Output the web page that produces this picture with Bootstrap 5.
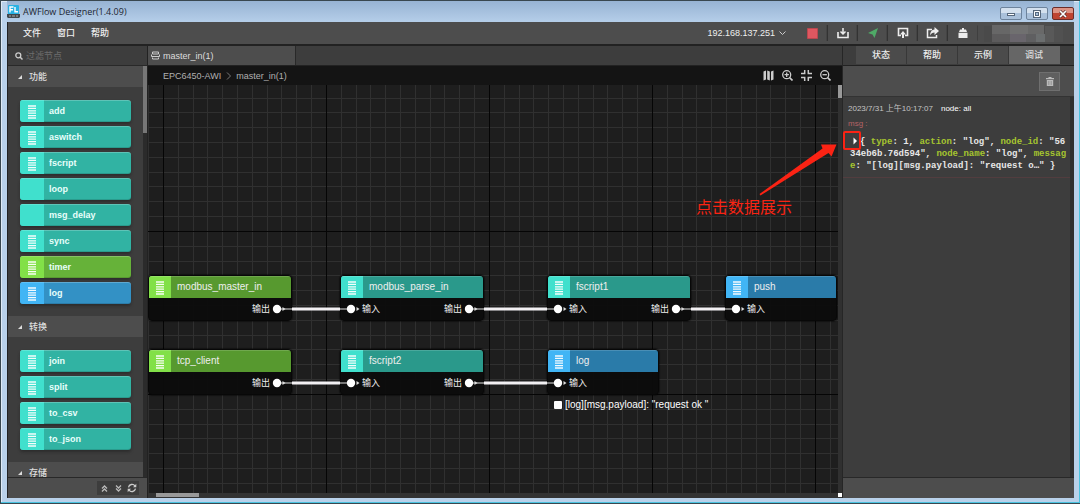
<!DOCTYPE html>
<html lang="zh-CN">
<head>
<meta charset="utf-8">
<meta name="viewport" content="width=device-width, initial-scale=1">
<title>AWFlow Designer(1.4.09)</title>
<link href="https://cdn.jsdelivr.net/npm/bootstrap@5.3.0/dist/css/bootstrap.min.css" rel="stylesheet">
<style>
  :root { --teal: #31b3a3; --teal-l: #40e0cd; --green: #66b239; --green-l: #82e048; --blue: #3391c5; --blue-l: #41b5f5; }
  body { font: 9px/12px "Liberation Sans", "Noto Sans CJK SC", sans-serif; color: #ddd; background: #b9d1ea; min-height: 100vh; }
  a { color: inherit; text-decoration: none; }
  svg { display: block; flex: none; }
  .btn { font-size: 9px; line-height: 12px; color: #eee; padding: 0; border: 0; border-radius: 0; --bs-btn-hover-color: #fff; }
  .app-window { height: 100vh; padding: 0 6px 5px 6px; background: #b9d1ea; border: solid #39474f; border-width: 1px 0 1px 1px; box-shadow: inset -1px -1px 0 #4ac3e0, inset 1px 1px 0 #dfeaf6; }
  .titlebar { height: 21px; gap: 3px; background: linear-gradient(#97b3d3, #b5cee9); color: #1c2530; font: 9px/14px "Open Sans", "Noto Sans", sans-serif; }
  .win-btn { width: 22px; height: 13px; border: 1px solid #6d839c; border-radius: 2px; background: linear-gradient(#d3e0ee 45%, #a9c0da 50%); }
  .win-close { background: linear-gradient(#dd9385 45%, #bf4331 50%); border-color: #6b2c28; }
  .app-body { background: #333; border-left: 1px solid #222; }
  .menubar { height: 24px; background: #4d4d4d; border-bottom: 2px solid #222; padding: 0 10px 0 15px; }
  .menubar .menu-item { font-weight: 500; }
  .host { margin-right: 11px; }
  .tool { width: 30px; height: 16px; border-left: 1px solid #333; box-shadow: -1px 0 0 #444; }
  .tool.tool-first { border-left: 0; box-shadow: none; }
  .sidebar { width: 139px; background: #3d3d3d; }
  .search { height: 20px; border-bottom: 1px solid #292929; padding-left: 7px; gap: 3px; }
  .search input { background: transparent; border: 0; color: #ddd; padding: 0; width: 100px; outline: 0; }
  .search input::placeholder { color: #6c6c6c; opacity: 1; }
  .group-head { height: 21px; background: #4d4d4d; width: 135px; font-weight: 500; padding-left: 9px; gap: 6px; }
  .group-items { padding: 13px 16px 12px 12px; gap: 4px; }
  .palette { height: 22px; border-radius: 3px; background: var(--c); box-shadow: 0 2px 3px #2229, inset 0 1px 0 #ffffff38, inset 0 -1px 0 #0002; color: #e8fffb; font-weight: bold; overflow: hidden; gap: 5px; }
  .glyph-box { width: 24px; height: 100%; background: var(--l); color: #fffffff0; border-top: 1px solid #ffffff2a; }
  .side-scroll { width: 4px; background: #2b2b2b; top: 0; right: 0; bottom: 0; }
  .side-thumb { height: 67px; background: #777; }
  .foot { height: 21px; background: #4d4d4d; border-top: 1px solid #282828; }
  .foot .btn { width: 14px; height: 14px; background: #3d3d3d; color: #aaa; }
  .teal { --c: var(--teal); --l: var(--teal-l); --n: #2a998b; }
  .green { --c: var(--green); --l: var(--green-l); --n: #57992f; }
  .blue { --c: var(--blue); --l: var(--blue-l); --n: #2a7ba9; }
  .center { border-left: 1px solid #222; min-width: 0; }
  .tabs { height: 20px; background: #3d3d3d; border-bottom: 1px solid #222; }
  .tab-item { width: 148px; background: #4d4d4d; border-right: 1px solid #292929; color: #ddd; padding-left: 3px; gap: 3px; }
  .crumbs { height: 19px; background: #141414; color: #b0b0b0; padding: 0 7px 0 15px; }
  .board { background: #1e1e1e; min-width: 0; }
  .flow-node { width: 144px; height: 46px; border: 1px solid #080808; border-radius: 4px; background: #0c0c0cf2; overflow: hidden; box-shadow: 0 0 1px 1px #0006; }
  .flow-node.short { width: 112px; }
  .flow-node header { height: 22px; background: var(--n); font-size: 10px; box-shadow: inset 0 1px 0 #ffffff26; color: #eee; gap: 6px; }
  .flow-node .glyph-box { width: 22px; }
  .ports { height: 22px; padding: 0 21px; color: #eee; }
  .node-status { font-size: 10px; gap: 3px; }
  .sb-v { width: 4px; background: #303030; }
  .sb-h { height: 5px; background: #333; }
  .thumb { background: #999; }
  .inspector { width: 232px; background: #3d3d3d; border-left: 1px solid #262626; }
  .inspector .tabs { padding-left: 13px; }
  .ins-tab { width: 51px; height: 18px; background: #4b4b4b; border-right: 1px solid #383838; font-weight: 500; }
  .ins-tab.active { background: #666; border-color: #666; }
  .ins-bar { height: 31px; background: #4d4d4d; border-bottom: 1px solid #333; padding-right: 14px; }
  .trash { width: 21px; height: 19px; background: #5f5f5f; border: 1px solid #6f6f6f; }
  .msg { border-bottom: 1px solid #523d3f; padding: 6px 1px 5px 5px; font-size: 8px; }
  .msg pre { font: bold 9px/12px "Liberation Mono", monospace; white-space: pre-wrap; word-break: break-all; color: #e8e8e8; margin: 6px 0 0 2px; overflow: visible; }
  .msg pre b { color: #a6c52f; }
  .msg .toggle { width: 10px; height: 10px; vertical-align: -2px; }
  .msg-when { color: #c4c4c4; gap: 8px; }
  .msg-topic { color: #b56366; padding-top: 3px; }
  .ins-scroll { width: 4px; background: #303030; }
  .callout-text { font-size: 16px; line-height: 24px; color: #f92413; top: 150px; right: 282px; }
</style>
</head>
<body>
<svg width="0" height="0" class="position-absolute" aria-hidden="true">
  <symbol id="g" viewBox="0 0 8 14"><path d="M0 1h8M0 3.400h8M0 5.800h8M0 8.200h8M0 10.600h8M0 13h8" stroke="currentColor" stroke-width="1.300"/></symbol>
  <symbol id="tri" viewBox="0 0 6 6"><path d="M5 1v4H1z" fill="currentColor"/></symbol>
</svg>
<div class="app-window d-flex flex-column">
  <div class="titlebar d-flex align-items-center flex-shrink-0">
    <svg width="13" height="13" viewBox="0 0 13 13" aria-hidden="true"><rect x="1" y="0" width="11" height="12" rx="1" fill="#27b2e4"/><path d="M0 9h13v3l-1 1H1l-1-1z" fill="#41484d"/><path d="M3 7.500V2h3.500M3 4.700h3M8 2v4.800h3" fill="none" stroke="#fff" stroke-width="1.400"/><path d="M2 11h2M5 11h3M9 11h2" stroke="#aaa"/></svg>
    <span class="text-nowrap">AWFlow Designer(1.4.09)</span>
    <div class="d-flex ms-auto gap-1 pt-1">
      <button class="btn win-btn d-flex align-items-center justify-content-center" aria-label="最小化"><svg width="10" height="6"><rect x="1.500" y="2.500" width="7" height="2" fill="#fff" stroke="#56677b"/></svg></button>
      <button class="btn win-btn d-flex align-items-center justify-content-center" aria-label="最大化"><svg width="8" height="8"><path d="M1.500 1.500h5v5h-5z" fill="none" stroke="#56677b" stroke-width="3"/><path d="M1.500 1.500h5v5h-5z" fill="none" stroke="#fff"/></svg></button>
      <button class="btn win-btn win-close d-flex align-items-center justify-content-center" aria-label="关闭"><svg width="10" height="8"><path d="M2 1l6 6M8 1L2 7" stroke="#5c3030" stroke-width="3"/><path d="M2 1l6 6M8 1L2 7" stroke="#fff" stroke-width="1.700"/></svg></button>
    </div>
  </div>

  <div class="app-body d-flex flex-column flex-fill overflow-hidden">
    <nav class="menubar d-flex align-items-center flex-shrink-0">
      <div class="d-flex gap-3">
        <button class="btn menu-item">文件</button><button class="btn menu-item">窗口</button><button class="btn menu-item">帮助</button>
      </div>
      <div class="d-flex align-items-center ms-auto">
        <button class="btn host d-flex align-items-center gap-1">192.168.137.251 <svg width="7" height="5"><path d="M0.500 0.500l3 3 3-3" fill="none" stroke="#ccc"/></svg></button>
        <button class="btn tool tool-first d-flex align-items-center justify-content-center" aria-label="停止"><svg width="11" height="11"><path d="M.5.5h10v10H.5z" fill="#df5760" stroke="#b9474f"/></svg></button>
        <button class="btn tool d-flex align-items-center justify-content-center" aria-label="下载"><svg width="12" height="12"><path d="M1 5v5.500h10V5" fill="none" stroke="#eee" stroke-width="1.600"/><path d="M6 1v6M3.500 4.500L6 7l2.500-2.500" fill="none" stroke="#eee" stroke-width="1.500"/></svg></button>
        <button class="btn tool d-flex align-items-center justify-content-center" aria-label="运行"><svg width="12" height="12"><path d="M11 1L7.500 11 5.500 7.500 1 6z" fill="#4faa67"/></svg></button>
        <button class="btn tool d-flex align-items-center justify-content-center" aria-label="上传"><svg width="12" height="12"><path d="M4 8.500H1.500v-7h9v7H8" fill="none" stroke="#eee" stroke-width="1.600"/><path d="M6 4l3 3.500H7V11H5V7.500H3z" fill="#eee"/></svg></button>
        <button class="btn tool d-flex align-items-center justify-content-center" aria-label="导出"><svg width="13" height="12"><path d="M6 2.500H1.500v8h9V8" fill="none" stroke="#eee" stroke-width="1.500"/><path d="M8.500 0L13 4 8.500 8V5.500Q5.500 5.500 4 8.500 4.200 3 8.500 2.500z" fill="#eee"/></svg></button>
        <button class="btn tool d-flex align-items-center justify-content-center" aria-label="清理"><svg width="10" height="12"><path d="M4 1h2v1.500h2L9 5H1l1-2.500h2zM.5 5.800h9V11h-9z" fill="#eee"/></svg></button>
        <svg width="87" height="20" aria-hidden="true"><path d="M0 2.500v15" stroke="#333"/><g><path d="M7 3h8v16H7z" fill="#4a4a4a"/><path d="M15 2h18v9H15z" fill="#676767"/><path d="M33 2h18v9H33z" fill="#707070"/><path d="M51 2h16v9H51z" fill="#696969"/><path d="M15 11h18v8H15z" fill="#5c5b5c"/><path d="M33 11h16v8H33z" fill="#69656c"/><path d="M49 11h10v8H49z" fill="#5f5f61"/><path d="M59 11h9v8h-9z" fill="#6b6e6f"/><path d="M68 3h9v16h-9z" fill="#595959"/><path d="M77 3h9v16h-9z" fill="#515151"/></g></svg>
      </div>
    </nav>

    <div class="d-flex flex-fill position-relative overflow-hidden">
      <aside class="sidebar d-flex flex-column flex-shrink-0">
        <label class="search d-flex align-items-center flex-shrink-0">
          <svg width="8" height="8" aria-hidden="true"><circle cx="3.300" cy="3.300" r="2.500" fill="none" stroke="#ccc" stroke-width="1.300"/><path d="M5 5l2.500 2.500" stroke="#ccc" stroke-width="1.500"/></svg>
          <input type="text" placeholder="过滤节点" aria-label="过滤节点">
        </label>
        <div class="flex-fill overflow-hidden position-relative" id="palette"></div>
        <div class="foot d-flex align-items-center justify-content-end pe-2 flex-shrink-0">
          <button class="btn d-flex align-items-center justify-content-center" aria-label="全部折叠"><svg width="7" height="7"><path d="M1 3.500L3.500 1 6 3.500M1 6.500L3.500 4 6 6.500" fill="none" stroke="#bbb" stroke-width="1.300"/></svg></button>
          <button class="btn d-flex align-items-center justify-content-center" aria-label="全部展开"><svg width="7" height="7"><path d="M1 .5L3.500 3 6 .5M1 3.500L3.500 6 6 3.500" fill="none" stroke="#bbb" stroke-width="1.300"/></svg></button>
          <button class="btn d-flex align-items-center justify-content-center" aria-label="刷新"><svg width="10" height="10"><path d="M1.500 4.300A3.600 3.600 0 0 1 8 3M8.500 5.700A3.600 3.600 0 0 1 2 7" fill="none" stroke="#ccc" stroke-width="1.300"/><path d="M9.300.8v3.500H6zM.7 9.200V5.700H4z" fill="#ccc"/></svg></button>
        </div>
      </aside>

      <main class="center d-flex flex-column flex-fill">
        <div class="tabs d-flex flex-shrink-0">
          <a href="#" class="tab-item d-flex align-items-center">
            <svg width="9" height="9" aria-hidden="true"><path d="M1.500 1h6v2h-6zM.5 3.500v2h8v-2M1.500 6.500v1.500h6V6.500" fill="none" stroke="#ccc"/></svg>master_in(1)</a>
        </div>
        <div class="crumbs d-flex align-items-center flex-shrink-0">
          <a href="#">EPC6450-AWI</a>
          <svg width="15" height="8" aria-hidden="true"><path d="M6 .5l3.500 3.500-3.500 3.500" fill="none" stroke="#777"/></svg>
          <a href="#">master_in(1)</a>
          <div class="d-flex ms-auto gap-2">
            <button class="btn" aria-label="地图"><svg width="11" height="11"><path d="M.5 1.500l2.500-1v9l-2.500 1zM4.200.5l2.600 1v9l-2.600-1zM8 1.500l2.500-1v9L8 10.500z" fill="#ccc"/></svg></button>
            <button class="btn" aria-label="放大"><svg width="11" height="11"><g fill="none" stroke="#ccc"><circle cx="4.700" cy="4.700" r="4" stroke-width="1.300"/><path d="M7.500 7.500l3 3" stroke-width="1.700"/><path d="M2.500 4.700h4.400M4.700 2.500v4.400" stroke-width="1.300"/></g></svg></button>
            <button class="btn" aria-label="适应"><svg width="11" height="11"><path d="M0 3.500h3.700V0M7.300 0v3.500H11M0 7.500h3.700V11M7.300 11V7.500H11" fill="none" stroke="#ccc" stroke-width="1.500"/></svg></button>
            <button class="btn me-1" aria-label="缩小"><svg width="11" height="11"><g fill="none" stroke="#ccc"><circle cx="4.700" cy="4.700" r="4" stroke-width="1.300"/><path d="M7.500 7.500l3 3" stroke-width="1.700"/><path d="M2.500 4.700h4.400" stroke-width="1.300"/></g></svg></button>
          </div>
        </div>
        <div class="d-flex flex-fill overflow-hidden">
          <div class="board position-relative flex-fill overflow-hidden" id="board">
            <svg class="position-absolute top-0 start-0 w-100 h-100" aria-hidden="true">
              <defs><pattern id="grid" x="15" y="-17" width="163" height="163" patternUnits="userSpaceOnUse">
                <path d="M15.500 0v163M30.500 0v163M44.500 0v163M59.500 0v163M74.500 0v163M89.500 0v163M104.500 0v163M118.500 0v163M133.500 0v163M148.500 0v163M0 15.500h163M0 30.500h163M0 44.500h163M0 59.500h163M0 74.500h163M0 89.500h163M0 104.500h163M0 118.500h163M0 133.500h163M0 148.500h163" stroke="#303030"/>
                <path d="M.5 0v163M0 .5h163" stroke="#050505"/>
              </pattern></defs>
              <rect width="100%" height="100%" fill="url(#grid)"/>
            </svg>
            <div id="nodes"></div>
            <svg class="position-absolute top-0 start-0 w-100 h-100" aria-hidden="true" id="wires"></svg>
          </div>
          <div class="sb-v flex-shrink-0"><div class="thumb" style="height:13px"></div></div>
        </div>
        <div class="sb-h d-flex justify-content-between flex-shrink-0 ps-2"><div class="thumb" style="width:43px;height:4px"></div><div class="bg-white" style="width:4px;height:4px"></div></div>
      </main>

      <aside class="inspector d-flex flex-column flex-shrink-0">
        <div class="tabs d-flex flex-shrink-0">
          <button class="btn ins-tab">状态</button><button class="btn ins-tab">帮助</button><button class="btn ins-tab">示例</button><button class="btn ins-tab active">调试</button>
        </div>
        <div class="ins-bar d-flex align-items-center justify-content-end flex-shrink-0">
          <button class="btn trash d-flex align-items-center justify-content-center" aria-label="清空"><svg width="8" height="9"><path d="M0 1h2.500V0h3v1H8v1.300H0zM.8 3h6.400v6H.8z" fill="#bbb"/><path d="M2.800 4v4M5.200 4v4" stroke="#888" stroke-width=".8"/></svg></button>
        </div>
        <div class="d-flex flex-fill overflow-hidden">
          <div class="flex-fill overflow-hidden">
            <div class="msg">
              <div class="msg-when d-flex"><span>2023/7/31 上午10:17:07</span><a href="#" class="text-white">node: all</a></div>
              <div class="msg-topic">msg :</div>
              <pre><svg class="toggle d-inline-block" viewBox="0 0 10 10"><path d="M3.500 1.500L7 5 3.500 8.500z" fill="#fff"/></svg>{ <b>type</b>: 1, <b>action</b>: "log", <b>node_id</b>: "56<wbr>34eb6b.76d594", <b>node_name</b>: "log", <b>messag<wbr>e</b>: "[log][msg.payload]: "request o…" }</pre>
            </div>
          </div>
          <div class="ins-scroll flex-shrink-0"></div>
        </div>
        <div class="foot flex-shrink-0"></div>
      </aside>

      <!-- annotation: marker box, arrow and caption, anchored to the right edge -->
      <svg class="position-absolute top-0 end-0 pe-none" width="384" height="180" aria-hidden="true">
        <rect x="154" y="86" width="16" height="17" rx="1" fill="none" stroke="#fb2314" stroke-width="2"/>
        <path d="M69.500 148L132.500 102.500l-1.500-4 15.500 0-5 12-3-3.500L70.500 149.500z" fill="#fb2314"/>
      </svg>
      <div class="callout-text position-absolute text-nowrap">点击数据展示</div>
    </div>
  </div>
</div>
<script src="https://cdn.jsdelivr.net/npm/bootstrap@5.3.0/dist/js/bootstrap.bundle.min.js"></script>
<script>
  const glyph = (w, h) => `<svg width="${w}" height="${h}"><use href="#g"/></svg>`;
  const groups = [
    ['功能', [['add','teal'],['aswitch','teal'],['fscript','teal'],['loop','teal',1],['msg_delay','teal',1],['sync','teal'],['timer','green'],['log','blue']]],
    ['转换', [['join','teal'],['split','teal'],['to_csv','teal'],['to_json','teal']]],
    ['存储', []]
  ];
  document.getElementById('palette').innerHTML = groups.map(([name, items]) =>
    `<div class="group-head d-flex align-items-center"><svg width="6" height="6"><use href="#tri"/></svg>${name}</div>` +
    `<div class="group-items d-flex flex-column">` + items.map(([t, c, plain]) =>
      `<div class="palette ${c} d-flex align-items-center"><span class="glyph-box d-flex align-items-center justify-content-center">${plain ? '' : glyph(8, 14)}</span><span>${t}</span></div>`).join('') + `</div>`
  ).join('') + '<div class="side-scroll position-absolute"><div class="side-thumb"></div></div>';

  // flow nodes: label, colour, x, y, has input, has output
  const nodes = [
    ['modbus_master_in','green',0,190,0,1], ['modbus_parse_in','teal',192,190,1,1], ['fscript1','teal',399,190,1,1], ['push','blue',577,190,1,0],
    ['tcp_client','green',0,264,0,1], ['fscript2','teal',192,264,1,1], ['log','blue',399,264,1,0]
  ];
  document.getElementById('nodes').innerHTML = nodes.map(([t, c, x, y, i, o]) =>
    `<section class="flow-node ${o ? '' : 'short'} ${c} position-absolute" style="left:${x}px;top:${y}px"><header class="d-flex align-items-center"><span class="glyph-box d-flex align-items-center justify-content-center">${glyph(8, 14)}</span><span>${t}</span></header>` +
    `<div class="ports d-flex align-items-center justify-content-between"><span>${i ? '输入' : ''}</span><span>${o ? '输出' : ''}</span></div></section>`
  ).join('') + '<div class="node-status position-absolute d-flex align-items-center text-white text-nowrap" style="left:406px;top:314px"><svg width="8" height="8"><rect width="8" height="8" rx="1" fill="#fff"/></svg>[log][msg.payload]: "request ok "</div>';

  const port = (x, y) => `<circle cx="${x}" cy="${y}" r="4.200" fill="#fff"/><path d="M${x+5.500} ${y-2}l3 2-3 2z" fill="#ddd"/>`;
  let w = '';
  const wires = [[144,192,224],[336,399,224],[543,577,224],[144,192,298],[336,399,298]];
  for (const [a, b, y] of wires)
    w += `<path d="M${a-14} ${y}H${a}M${b} ${y}H${b+10}" stroke="#777" stroke-width="2"/><path d="M${a} ${y}H${b}" stroke="#f2f0f3" stroke-width="3"/>` + port(a - 15, y) + port(b + 11, y);
  document.getElementById('wires').innerHTML = w;
</script>
</body>
</html>
